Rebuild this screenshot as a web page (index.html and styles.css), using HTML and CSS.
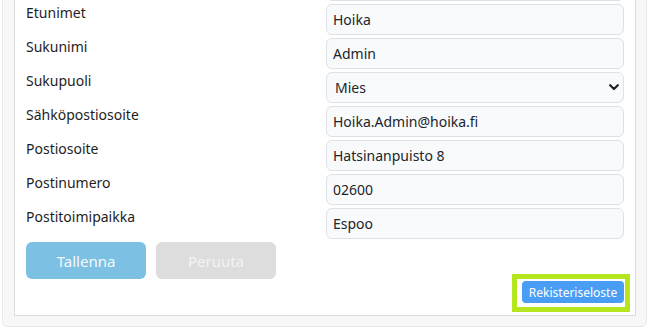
FILE: index.html
```html
<!DOCTYPE html>
<html lang="fi">
<head>
    <meta charset="UTF-8">
    <meta name="viewport" content="width=device-width, initial-scale=1.0">
    <title>Omat tiedot</title>
    <link rel="stylesheet" href="styles.css">
</head>
<body>

    <div class="page">
        <div class="card">
            <form class="profile-form">
                <span class="field-label"></span>
                <input class="field-input" type="text" id="kayttaja" value="">

                <label class="field-label" for="etunimet">Etunimet</label>
                <input class="field-input" type="text" id="etunimet" value="Hoika">

                <label class="field-label" for="sukunimi">Sukunimi</label>
                <input class="field-input" type="text" id="sukunimi" value="Admin">

                <label class="field-label" for="sukupuoli">Sukupuoli</label>
                <div class="select-wrap">
                    <select class="field-input field-select" id="sukupuoli">
                        <option selected>Mies</option>
                        <option>Nainen</option>
                        <option>Muu</option>
                    </select>
                    <svg class="chevron" width="10" height="7" viewBox="0 0 10 7">
                        <path d="M1.2 1.2 L5 5 L8.8 1.2" fill="none" stroke="#222" stroke-width="2.2" stroke-linecap="round" stroke-linejoin="round"/>
                    </svg>
                </div>

                <label class="field-label" for="email">Sähköpostiosoite</label>
                <input class="field-input" type="text" id="email" value="Hoika.Admin@hoika.fi">

                <label class="field-label" for="osoite">Postiosoite</label>
                <input class="field-input" type="text" id="osoite" value="Hatsinanpuisto 8">

                <label class="field-label" for="postinumero">Postinumero</label>
                <input class="field-input" type="text" id="postinumero" value="02600">

                <label class="field-label" for="toimipaikka">Postitoimipaikka</label>
                <input class="field-input" type="text" id="toimipaikka" value="Espoo">
            </form>

            <div class="form-buttons">
                <button class="btn btn-save" disabled>Tallenna</button>
                <button class="btn btn-cancel" disabled>Peruuta</button>
            </div>

            <div class="register-row">
                <span class="highlight">
                    <button class="btn-register">Rekisteriseloste</button>
                </span>
            </div>
        </div>
    </div>

</body>
</html>
```

FILE: styles.css
```css
body {
    margin: 0;
    background-color: #ffffff;
    font-family: 'Noto Sans', 'Open Sans', sans-serif;
    color: #1e1e1e;
}
.page {
    margin: -55px 4px 0 2px;
    padding: 11px 10px 10px 11px;
    background-color: #f7f7f7;
    border: 1px solid #e9e9e9;
    border-radius: 5px;
}
.card {
    background-color: white;
    border: 1px solid #dcdcdc;
    padding: 12px 11px;
}
.profile-form {
    display: grid;
    grid-template-columns: 290px 1fr;
    column-gap: 10px;
    row-gap: 3px;
}
.field-label {
    font-size: 14px;
    line-height: 17px;
}
.field-input {
    box-sizing: border-box;
    width: 100%;
    height: 31px;
    padding: 0 6px;
    font-family: 'Noto Sans', 'Open Sans', sans-serif;
    font-size: 14px;
    color: #212529;
    background-color: #f8fafc;
    border: 1px solid #dee2e6;
    border-radius: 6px;
}
.select-wrap {
    position: relative;
}
.field-select {
    appearance: none;
    -webkit-appearance: none;
    padding-left: 8px;
}
.chevron {
    position: absolute;
    right: 5px;
    top: 12px;
    pointer-events: none;
}
.form-buttons {
    display: flex;
    gap: 10px;
    margin-top: 3px;
}
.btn {
    width: 120px;
    height: 37px;
    border: none;
    border-radius: 6px;
    font-family: 'Noto Sans', 'Open Sans', sans-serif;
    font-size: 15px;
}
.btn-save {
    background-color: #7cc1e3;
    color: #f4f9fc;
}
.btn-cancel {
    background-color: #dddddd;
    color: #f3f3f3;
}
.register-row {
    display: flex;
    justify-content: flex-end;
    margin-top: 2px;
}
.highlight {
    position: relative;
    display: inline-flex;
}
/* marker box round the button */
.highlight::after {
    content: '';
    position: absolute;
    left: -10px;
    right: -6px;
    top: -7px;
    bottom: -9px;
    border: 5px solid #b5e61d;
}
.btn-register {
    width: 102px;
    height: 22px;
    padding: 0;
    background-color: #4a9df4;
    color: white;
    border: none;
    border-radius: 4px;
    font-family: 'Noto Sans', 'Open Sans', sans-serif;
    font-size: 12px;
}
```
